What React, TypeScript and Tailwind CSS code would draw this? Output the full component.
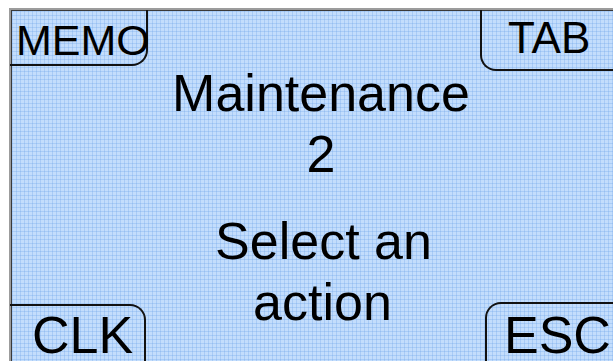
// soft-key screen
const SoftKey = ({ label, className, textClassName }: { label: string; className: string; textClassName: string }) => (
  <div className={"shrink-0 border-[#111] " + className}>
    <span className={"block text-black leading-none whitespace-nowrap " + textClassName}>{label}</span>
  </div>
);

export default function App() {
  return (
    <div
      className="w-[613px] h-[361px] overflow-hidden bg-white pt-[8px] pl-[9px]"
      style={{ fontFamily: '"Liberation Sans", Arial, sans-serif' }}
    >
      <div className="h-full w-full border-t-2 border-l-2 border-[#9c9c9c]">
        <div className="h-full w-full border-t border-l border-[#3a3a3a]">
          <div className="grid h-full w-full bg-[#c3ddfc] bg-[linear-gradient(rgba(120,170,235,0.35)_1px,transparent_1px),linear-gradient(90deg,rgba(120,170,235,0.35)_1px,transparent_1px)] bg-size-[4px_4px]">
            {/* message */}
            <div className="col-start-1 row-start-1 flex flex-col items-center pt-[52px] pl-[17px] text-[52px] leading-[61px] text-black">
              <div>Maintenance</div>
              <div>2</div>
              <div className="mt-[26px] pl-[5px]">Select an</div>
              <div className="pl-[3px]">action</div>
            </div>

            {/* soft keys */}
            <div className="col-start-1 row-start-1 flex flex-col justify-between">
              <div className="flex justify-between items-start">
                <SoftKey
                  label="MEMO"
                  className="-ml-[2px] -mt-[1px] w-[138px] h-[56px] border-r-2 border-b-2 rounded-br-[16px] pt-[9px] pl-[6px]"
                  textClassName="text-[43px]"
                />
                <SoftKey
                  label="TAB"
                  className="-mr-[17px] -mt-[1px] w-[150px] h-[61px] border-l-2 border-b-2 rounded-bl-[16px] pt-[6px] pl-[26px]"
                  textClassName="text-[44px]"
                />
              </div>
              <div className="flex justify-between items-end">
                <SoftKey
                  label="CLK"
                  className="-ml-[2px] -mb-[23px] w-[136px] h-[80px] border-t-2 border-r-2 rounded-tr-[16px] pt-[3px] pl-[22px]"
                  textClassName="text-[52px]"
                />
                <SoftKey
                  label="ESC"
                  className="-mr-[32px] -mb-[21px] w-[160px] h-[80px] border-t-2 border-l-2 rounded-tl-[16px] pt-[5px] pl-[17px]"
                  textClassName="text-[52px]"
                />
              </div>
            </div>
          </div>
        </div>
      </div>
    </div>
  );
}
